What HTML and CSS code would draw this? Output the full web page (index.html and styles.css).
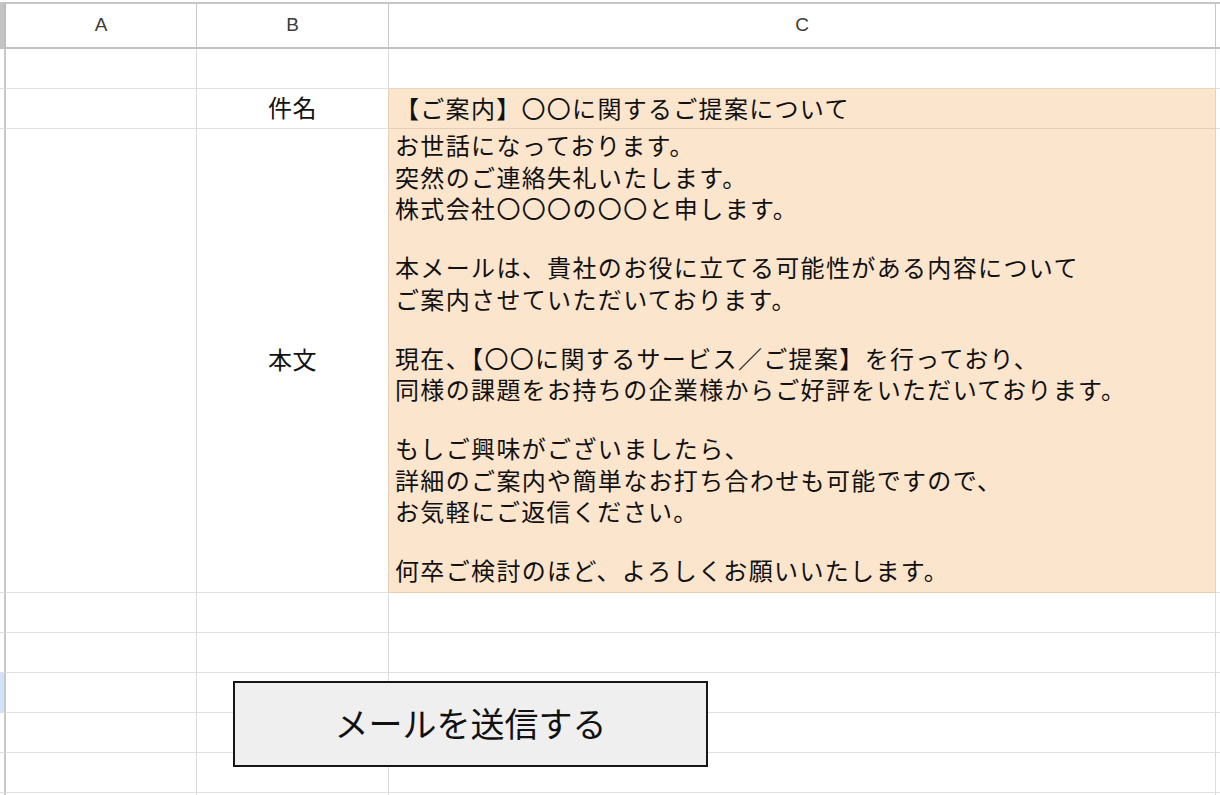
FILE: index.html
```html
<!DOCTYPE html>
<html lang="ja">
<head>
<meta charset="utf-8">
<title>メール送信シート</title>
<link rel="stylesheet" href="styles.css">
</head>
<body>
<div class="sheet">
  <div class="grid">
    <!-- header -->
    <div class="hd strip-hd"></div>
    <div class="hd">A</div>
    <div class="hd">B</div>
    <div class="hd">C</div>
    <div class="hd end"></div>

    <!-- row 1 -->
    <div class="strip"></div>
    <div class="cell"></div>
    <div class="cell"></div>
    <div class="cell tan-b"></div>
    <div class="cell end"></div>

    <!-- row 2 -->
    <div class="strip"></div>
    <div class="cell"></div>
    <div class="cell label tan-r">件名</div>
    <div class="cell fill subject">【ご案内】〇〇に関するご提案について</div>
    <div class="cell end"></div>

    <!-- row 3 -->
    <div class="strip"></div>
    <div class="cell"></div>
    <div class="cell label tan-r">本文</div>
    <div class="cell fill body-text">
      <div class="ln">お世話になっております。</div>
      <div class="ln">突然のご連絡失礼いたします。</div>
      <div class="ln">株式会社〇〇〇の〇〇と申します。</div>
      <div class="gap"></div>
      <div class="ln">本メールは、貴社のお役に立てる可能性がある内容について</div>
      <div class="ln">ご案内させていただいております。</div>
      <div class="gap"></div>
      <div class="ln">現在、【〇〇に関するサービス／ご提案】を行っており、</div>
      <div class="ln">同様の課題をお持ちの企業様からご好評をいただいております。</div>
      <div class="gap"></div>
      <div class="ln">もしご興味がございましたら、</div>
      <div class="ln">詳細のご案内や簡単なお打ち合わせも可能ですので、</div>
      <div class="ln">お気軽にご返信ください。</div>
      <div class="gap"></div>
      <div class="ln">何卒ご検討のほど、よろしくお願いいたします。</div>
    </div>
    <div class="cell end"></div>

    <!-- row 4 -->
    <div class="strip"></div>
    <div class="cell"></div>
    <div class="cell"></div>
    <div class="cell"></div>
    <div class="cell end"></div>

    <!-- row 5 -->
    <div class="strip"></div>
    <div class="cell"></div>
    <div class="cell"></div>
    <div class="cell"></div>
    <div class="cell end"></div>

    <!-- row 6 -->
    <div class="strip selected"></div>
    <div class="cell"></div>
    <div class="cell"></div>
    <div class="cell"></div>
    <div class="cell end"></div>

    <!-- row 7 -->
    <div class="strip"></div>
    <div class="cell"></div>
    <div class="cell"></div>
    <div class="cell"></div>
    <div class="cell end"></div>

    <!-- row 8 -->
    <div class="strip"></div>
    <div class="cell"></div>
    <div class="cell"></div>
    <div class="cell"></div>
    <div class="cell end"></div>

    <!-- row 9 -->
    <div class="strip"></div>
    <div class="cell"></div>
    <div class="cell"></div>
    <div class="cell"></div>
    <div class="cell end"></div>
  </div>

  <button class="send-btn" type="button">メールを送信する</button>
</div>
</body>
</html>
```

FILE: styles.css
```css
html, body {
  margin: 0;
  padding: 0;
  background: #ffffff;
  overflow: hidden;
}

body {
  width: 1220px;
  height: 795px;
  font-family: "Noto Sans CJK JP", "Noto Sans", sans-serif;
  color: #111111;
}

.sheet {
  position: relative;
  width: 1220px;
  height: 795px;
  padding-top: 2px;
  box-sizing: border-box;
  overflow: hidden;
}

.grid {
  display: grid;
  grid-template-columns: 6px 191px 192px 827px 1fr;
  grid-template-rows: 47px 40px 40px 464px 40px 40px 40px 40px 40px 40px;
}

.grid > div {
  box-sizing: border-box;
}

/* header row */
.hd {
  border-top: 2px solid #c6c6c6;
  border-bottom: 2px solid #c2c2c2;
  border-right: 1px solid #c8c8c8;
  display: flex;
  align-items: center;
  justify-content: center;
  font-family: "Liberation Sans", Arial, sans-serif;
  font-size: 19px;
  color: #3c3c3c;
  padding-bottom: 1px;
}

.strip-hd {
  background: #c4c4c4;
  border-right: 2px solid #bdbdbd;
}

.hd.end,
.cell.end {
  border-right: none;
}

/* left row-header strip */
.strip {
  border-right: 2px solid #c8c8c8;
  border-bottom: 1px solid #dedede;
}

.strip.selected {
  background: #d3e3fd;
}

/* body cells */
.cell {
  border-right: 1px solid #dcdcdc;
  border-bottom: 1px solid #e1e1e1;
  font-size: 24px;
  color: #111111;
}

.label {
  display: flex;
  align-items: center;
  justify-content: center;
  letter-spacing: 0.6px;
  padding-bottom: 4px;
}

.fill {
  background: #fce5cd;
  border-right-color: #e7d0b9;
  border-bottom-color: #e6cdb3;
}

.tan-b {
  border-bottom-color: #e8d4c0;
}

.tan-r {
  border-right-color: #e6d0ba;
}

.subject {
  display: flex;
  align-items: center;
  padding-left: 6px;
  padding-bottom: 3px;
  letter-spacing: 1.3px;
  white-space: nowrap;
}

.body-text {
  padding: 0 0 0 6px;
  letter-spacing: 1.35px;
  white-space: nowrap;
}

.ln {
  height: 31.5px;
  line-height: 31.5px;
}

.gap {
  height: 27.5px;
}

/* drawing / button overlay */
.send-btn {
  position: absolute;
  left: 233px;
  top: 681px;
  width: 475px;
  height: 86px;
  box-sizing: border-box;
  border: 2px solid #161616;
  border-radius: 0;
  background: #efefef;
  font-family: "Noto Sans CJK JP", "Noto Sans", sans-serif;
  font-size: 34px;
  color: #111111;
  display: flex;
  align-items: center;
  justify-content: center;
  padding: 0 0 3px 0;
  margin: 0;
  cursor: pointer;
}
```
